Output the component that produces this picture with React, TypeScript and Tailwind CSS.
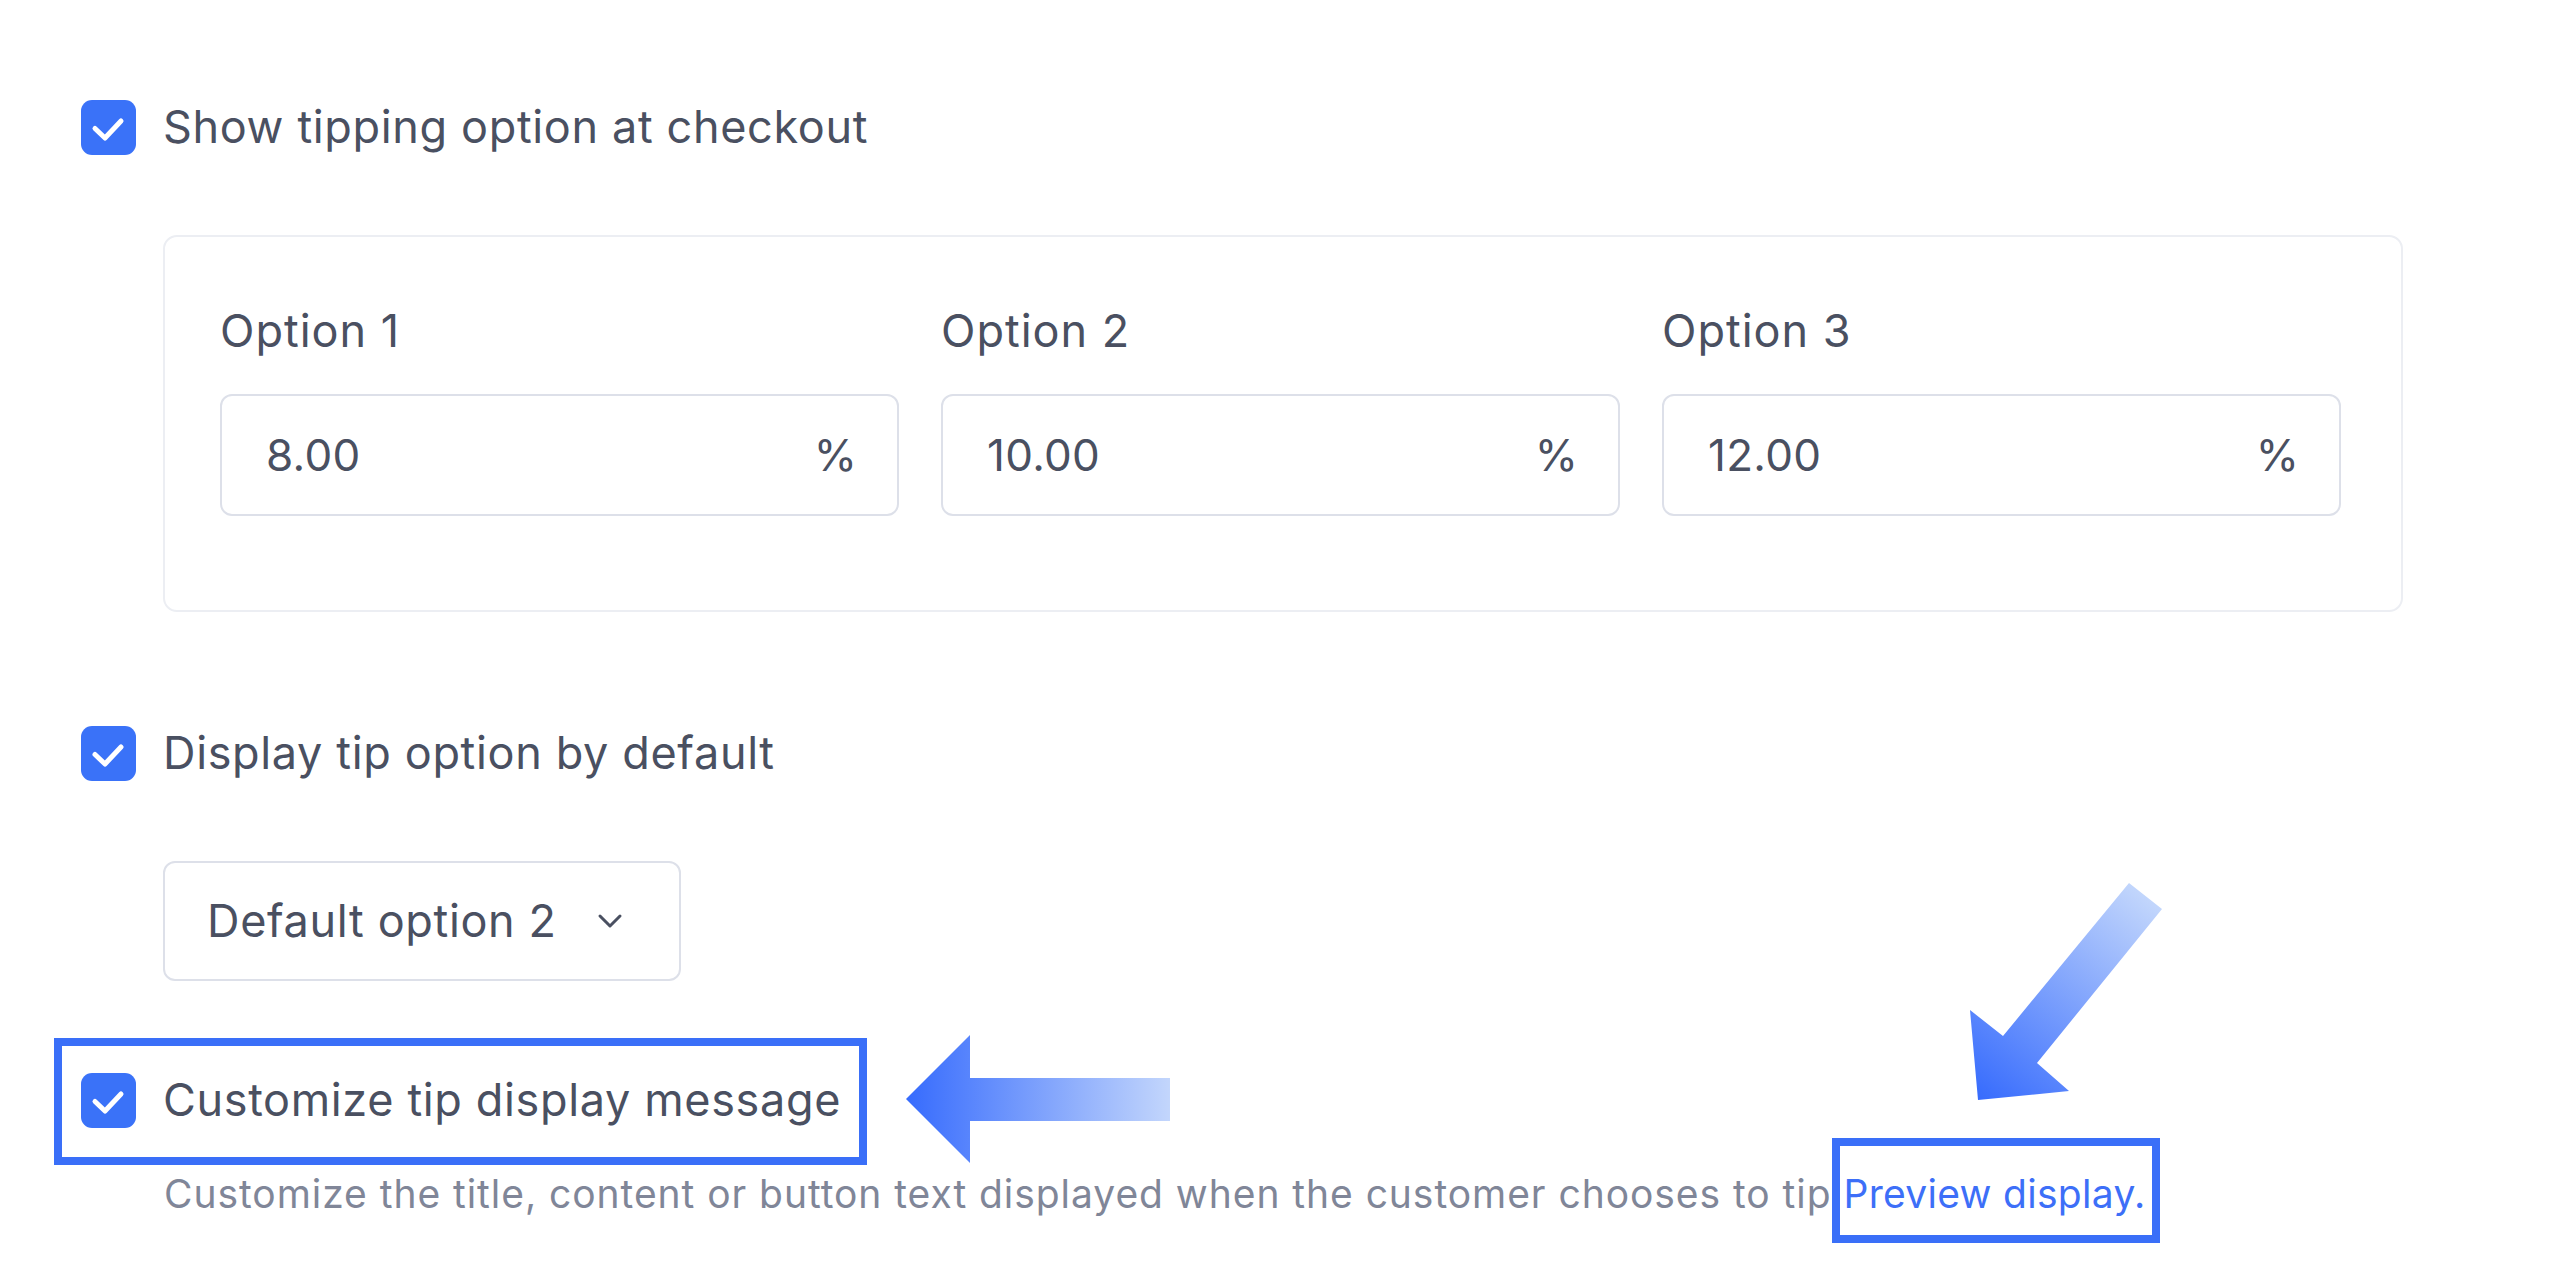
import React from 'react';

const CheckBox: React.FC = () => (
    <span className="w-[55px] h-[55px] shrink-0 rounded-[11px] bg-[#3a72f8] flex items-center justify-center">
        <svg width="55" height="55" viewBox="0 0 55 55" fill="none">
            <polyline points="14,28.5 24,38 40,21" stroke="white" strokeWidth="5" strokeLinecap="round" strokeLinejoin="round" />
        </svg>
    </span>
);

const PercentInput: React.FC<{ label: string; value: string }> = ({ label, value }) => (
    <div className="flex flex-col">
        <label className="text-[45px] leading-[56px] tracking-[1px] text-[#4a5061]">{label}</label>
        <div className="mt-[35px] h-[122px] border-2 border-[#dde0e9] rounded-[12px] flex items-center justify-between pl-[44px] pr-[40px]">
            <span className="text-[44px] tracking-[0.3px] text-[#4a5061]">{value}</span>
            <span className="text-[44px] text-[#4a5061]">%</span>
        </div>
    </div>
);

const App: React.FC = () => {
    return (
        <div className="relative w-full h-[1272px] bg-white overflow-hidden font-['Inter',sans-serif] text-[#4a5061] pl-[81px] pt-[99px]">
            <div className="flex items-center gap-[27px]">
                <CheckBox />
                <span className="text-[45px] leading-[56px] tracking-[0.65px]">Show tipping option at checkout</span>
            </div>

            <div className="mt-[80px] ml-[82px] w-[2240px] border-2 border-[#eceef3] rounded-[14px] pt-[66px] pb-[94px] pl-[55px] pr-[60px] grid grid-cols-3 gap-x-[42px]">
                <PercentInput label="Option 1" value="8.00" />
                <PercentInput label="Option 2" value="10.00" />
                <PercentInput label="Option 3" value="12.00" />
            </div>

            <div className="mt-[113px] flex items-center gap-[27px]">
                <CheckBox />
                <span className="text-[45px] leading-[56px] tracking-[0.65px]">Display tip option by default</span>
            </div>

            <div className="mt-[80px] ml-[82px] w-[518px] h-[120px] border-2 border-[#dde0e9] rounded-[12px] flex items-center pl-[42px] gap-[40px]">
                <span className="text-[45px] tracking-[0.65px]">Default option 2</span>
                <svg width="26" height="16" viewBox="0 0 26 16" fill="none">
                    <polyline points="3,3 13,13 23,3" stroke="#4a5061" strokeWidth="3" strokeLinecap="round" strokeLinejoin="round" />
                </svg>
            </div>

            <div className="relative mt-[91px] inline-flex items-center gap-[27px]">
                <CheckBox />
                <span className="text-[45px] leading-[56px] tracking-[0.65px]">Customize tip display message</span>
                <span className="absolute -left-[27px] -top-[34px] -right-[26px] -bottom-[37px] border-[8px] border-[#3a6ff8]" />
            </div>

            <p className="mt-[37px] ml-[83px] text-[39px] leading-[46px] tracking-[0.95px] text-[#808698] whitespace-nowrap">
                Customize the title, content or button text displayed when the customer chooses to tip{' '}
                <span className="relative text-[#3d6ff8] tracking-[0.3px]">
                    Preview display.
                    <span className="absolute -left-[11px] -top-[32px] -right-[15px] -bottom-[26px] border-[8px] border-[#3a6ff8]" />
                </span>
            </p>

            <svg className="absolute inset-0 pointer-events-none" width="2550" height="1272" viewBox="0 0 2550 1272">
                <defs>
                    <linearGradient id="leftArrow" x1="906" y1="0" x2="1170" y2="0" gradientUnits="userSpaceOnUse">
                        <stop offset="0" stopColor="#366bfd" />
                        <stop offset="1" stopColor="#c3d6fc" />
                    </linearGradient>
                    <linearGradient id="downArrow" x1="1978" y1="1100" x2="2150" y2="890" gradientUnits="userSpaceOnUse">
                        <stop offset="0" stopColor="#366bfd" />
                        <stop offset="1" stopColor="#c6d9fc" />
                    </linearGradient>
                </defs>
                <polygon points="906,1099 970,1035 970,1078 1170,1078 1170,1121 970,1121 970,1163" fill="url(#leftArrow)" />
                <polygon points="2129,883 2162,909 2037,1063 2069,1091 1978,1100 1970,1010 2003,1036" fill="url(#downArrow)" />
            </svg>
        </div>
    );
};

export default App;
